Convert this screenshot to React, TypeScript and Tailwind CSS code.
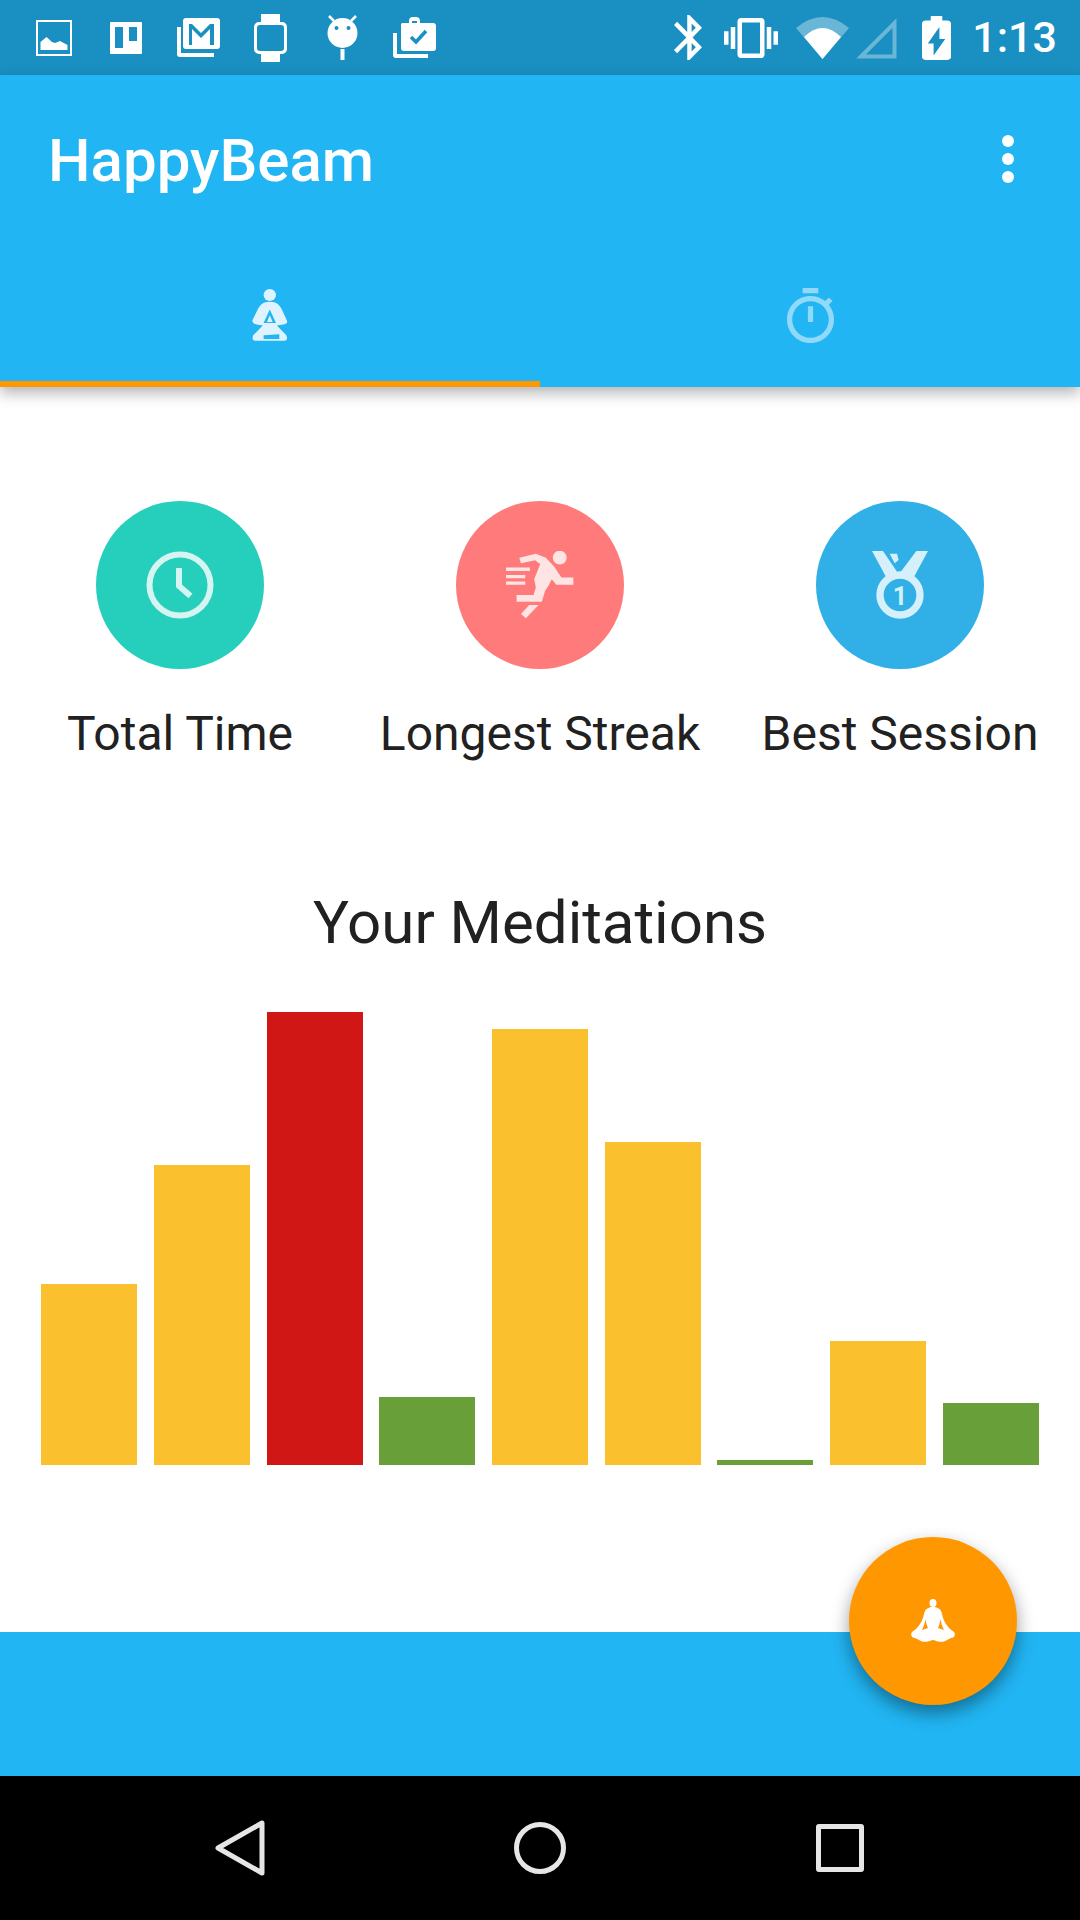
const bars = [
  { id: 1, height: 'h-[181px]', color: 'bg-[#fbc02d]' },
  { id: 2, height: 'h-[300px]', color: 'bg-[#fbc02d]' },
  { id: 3, height: 'h-[453px]', color: 'bg-[#d01716]' },
  { id: 4, height: 'h-[68px]', color: 'bg-[#689f38]' },
  { id: 5, height: 'h-[436px]', color: 'bg-[#fbc02d]' },
  { id: 6, height: 'h-[323px]', color: 'bg-[#fbc02d]' },
  { id: 7, height: 'h-[5px]', color: 'bg-[#689f38]' },
  { id: 8, height: 'h-[124px]', color: 'bg-[#fbc02d]' },
  { id: 9, height: 'h-[62px]', color: 'bg-[#689f38]' },
];

function StatusIconsLeft() {
  return (
    <div className="flex items-center">
      <svg viewBox="0 0 36 36" className="ml-[36px] h-[36px] w-[36px]" fill="none">
        <rect x="1" y="1" width="34" height="34" stroke="white" strokeWidth="2" />
        <path d="M4.500 30v-8l6-5 5.500 5 3 1 5-2 7.500 4v5z" fill="white" />
      </svg>
      <svg viewBox="0 0 32 32" className="ml-[38px] h-[32px] w-[32px]">
        <path fillRule="evenodd" d="M1 0h30a1 1 0 0 1 1 1v30a1 1 0 0 1-1 1H1a1 1 0 0 1-1-1V1a1 1 0 0 1 1-1zM5 5v21h8V5zm14 0v14h8V5z" fill="white" />
      </svg>
      <svg viewBox="0 0 43 39" className="ml-[35px] h-[39px] w-[43px]">
        <path fillRule="evenodd" d="M9 0h31a3 3 0 0 1 3 3v25a3 3 0 0 1-3 3H9a3 3 0 0 1-3-3V3a3 3 0 0 1 3-3zm3 6v21h3V11l9 9 9-9v16h4V6h-4l-9 9-9-9z" fill="white" />
        <path d="M0 9h4v26h33v4H3a3 3 0 0 1-3-3z" fill="white" />
      </svg>
      <svg viewBox="0 0 33 48" className="ml-[34px] h-[48px] w-[33px]">
        <path fillRule="evenodd" d="M7 0h19v8h2a5 5 0 0 1 5 5v22a5 5 0 0 1-5 5h-2v8H7v-8H5a5 5 0 0 1-5-5V13a5 5 0 0 1 5-5h2zM6 11a3 3 0 0 0-3 3v20a3 3 0 0 0 3 3h21a3 3 0 0 0 3-3V14a3 3 0 0 0-3-3z" fill="white" />
      </svg>
      <svg viewBox="0 0 31 45" className="ml-[40px] h-[45px] w-[31px]">
        <path d="M2 1l5 5M29 1l-5 5" stroke="white" strokeWidth="2.500" />
        <circle cx="15.500" cy="18" r="15" fill="white" />
        <circle cx="9.500" cy="13" r="2" fill="#1a8fc2" />
        <circle cx="21.500" cy="13" r="2" fill="#1a8fc2" />
        <rect x="13.500" y="34" width="4" height="11" fill="white" />
      </svg>
      <svg viewBox="0 0 43 41" className="ml-[35px] h-[41px] w-[43px]">
        <path fillRule="evenodd" d="M9 6h7V4a4 4 0 0 1 4-4h3a4 4 0 0 1 4 4v2h13a3 3 0 0 1 3 3v22a3 3 0 0 1-3 3H11a3 3 0 0 1-3-3V7zm10-2v2h5V4z" fill="white" />
        <path d="M18 20l5 5 10-11" stroke="#1a8fc2" strokeWidth="3.500" fill="none" />
        <path d="M0 16h4v21h31v4H3a3 3 0 0 1-3-3z" fill="white" />
      </svg>
    </div>
  );
}

function StatusIconsRight() {
  return (
    <div className="flex items-center">
      <svg viewBox="5 2 12.700 20" preserveAspectRatio="none" className="h-[45px] w-[28px]">
        <path d="M17.710 7.710L12 2h-1v7.590L6.410 5 5 6.410 10.590 12 5 17.590 6.410 19 11 14.410V22h1l5.710-5.710-4.300-4.290 4.300-4.290zM13 5.830l1.880 1.880L13 9.590V5.830zm1.880 10.460L13 18.170v-3.760l1.880 1.880z" fill="white" />
      </svg>
      <svg viewBox="0 3 24 18" preserveAspectRatio="none" className="ml-[22px] h-[40px] w-[54px]">
        <path d="M0 15h2V9H0v6zm3 2h2V7H3v10zm19-8v6h2V9h-2zm-3 8h2V7h-2v10zM16.500 3h-9C6.670 3 6 3.670 6 4.500v15c0 .83.67 1.500 1.500 1.500h9c.83 0 1.500-.67 1.500-1.500v-15c0-.83-.67-1.500-1.500-1.500zM16 19H8V5h8v14z" fill="white" />
      </svg>
      <svg viewBox="0 0 53 42" className="ml-[18px] h-[42px] w-[53px]">
        <path d="M0 11Q26.500-11 53 11L26.500 42z" fill="white" fillOpacity="0.35" />
        <path d="M8 20Q26.500 2 45 20L26.500 42z" fill="white" />
      </svg>
      <svg viewBox="0 0 42 42" className="ml-[6px] h-[42px] w-[42px]">
        <path d="M39.500 6v33.500H6z" fill="none" stroke="white" strokeOpacity="0.35" strokeWidth="4" />
      </svg>
      <svg viewBox="7 2 10 20" preserveAspectRatio="none" className="ml-[25px] h-[44px] w-[29px]">
        <path d="M15.670 4H14V2h-4v2H8.330C7.600 4 7 4.600 7 5.330v15.330C7 21.400 7.600 22 8.330 22h7.330c.74 0 1.340-.6 1.340-1.330V5.330C17 4.600 16.400 4 15.670 4zM11 20v-5.500H9L13 7v5.500h2L11 20z" fill="white" />
      </svg>
      <span className="mr-[23px] ml-[21px] text-[43px] leading-none font-medium text-white">1:13</span>
    </div>
  );
}

function SittingIcon() {
  return (
    <svg viewBox="124 87 87 155" preserveAspectRatio="none" className="h-[52px] w-[36px]">
      <ellipse cx="167" cy="105" rx="15" ry="18" fill="#def3fd" />
      <path
        fillRule="evenodd"
        d="M167 125C150 125 143 135 137 150L125 180Q124 190 135 193L150 196L127 225Q122 240 132 241H203Q212 240 207 225L184 196L200 193Q212 190 208 180L197 150C191 135 184 125 167 125ZM167 148L152 188H182ZM167 165L160 185H174ZM152 225L190 222V236H152Z"
        fill="#def3fd"
      />
    </svg>
  );
}

function TimerIcon() {
  return (
    <svg viewBox="3 1 18 21" className="h-[55px] w-[47px]">
      <path d="M15 1H9v2h6V1zm-4 13h2V8h-2v6zm8.030-6.610l1.420-1.420c-.43-.51-.9-.99-1.410-1.410l-1.420 1.420C16.070 4.740 14.120 4 12 4c-4.970 0-9 4.030-9 9s4.020 9 9 9 9-4.030 9-9c0-2.120-.74-4.070-1.970-5.610zM12 20c-3.870 0-7-3.130-7-7s3.130-7 7-7 7 3.130 7 7-3.130 7-7 7z" fill="#91d9f9" />
    </svg>
  );
}

function ClockIcon() {
  return (
    <svg viewBox="0 0 68 68" className="h-[68px] w-[68px]" fill="none">
      <circle cx="34" cy="34" r="30.500" stroke="#d4f5f1" strokeWidth="6" />
      <path d="M33 17v18l11.500 10" stroke="#d4f5f1" strokeWidth="6" />
    </svg>
  );
}

function RunnerIcon() {
  return (
    <svg viewBox="200 185 205 205" className="h-[68px] w-[68px]">
      <circle cx="362" cy="205" r="21" fill="#ffe4e4" />
      <path
        d="M240 205L290 193L320 205L345 232L367 265H403V287H352L338 270L328 290L318 305L308 338H232V318H283L290 295L285 270L303 225L288 213L245 222Z"
        fill="#ffe4e4"
      />
      <path d="M298 348H270L245 375L260 388Z" fill="#ffe4e4" />
      <path d="M200 240H272M200 262H258M200 282H258" stroke="#ffe4e4" strokeWidth="10" />
    </svg>
  );
}

function MedalIcon() {
  return (
    <svg viewBox="217 185 168 204" className="h-[68px] w-[56px]" fill="none">
      <path d="M217 185H250L292 247L285 268H262ZM385 185H350L300 252L312 268H340Z" fill="#d6f0fb" />
      <path d="M270 193H292L297 212L285 222Z" fill="#d6f0fb" />
      <circle cx="301" cy="317" r="60" stroke="#d6f0fb" strokeWidth="22" />
      <text x="301" y="347" fontSize="76" fontWeight="700" textAnchor="middle" fill="#d6f0fb">1</text>
    </svg>
  );
}

function MeditateIcon() {
  return (
    <svg viewBox="0 0 44 44" className="h-[44px] w-[44px]">
      <ellipse cx="22" cy="4" rx="3.500" ry="4" fill="white" />
      <path
        fillRule="evenodd"
        d="M22 8c5 0 8 2 9 7 1 6 4 11 8 15l4 3c2 3 0 6-3 6l-6 3c-4 2-8 0-12-1-4 1-8 3-12 1l-6-3c-3 0-5-3-3-6l4-3c4-4 7-9 8-15 1-5 4-7 9-7zM14.500 20C14 24 12.500 28 11 31L17 29C15.500 26 15 23 14.500 20ZM29.500 20C29 23 28.500 26 27 29L33 31C31.500 28 30 24 29.500 20Z"
        fill="white"
      />
    </svg>
  );
}

function NavBar() {
  return (
    <div className="flex h-[144px] items-center justify-center bg-black">
      <div className="flex w-[300px] justify-center">
        <svg viewBox="0 0 50 56" className="h-[56px] w-[50px]" fill="none">
          <path d="M47 3v50L3 28z" stroke="#e6e6e6" strokeWidth="5" strokeLinejoin="round" />
        </svg>
      </div>
      <div className="flex w-[300px] justify-center">
        <div className="h-[52px] w-[52px] rounded-full border-[5px] border-[#e6e6e6]" />
      </div>
      <div className="flex w-[300px] justify-center">
        <div className="h-[48px] w-[48px] rounded-[3px] border-[5px] border-[#e6e6e6]" />
      </div>
    </div>
  );
}

export default function App() {
  return (
    <div className="relative flex h-[1920px] w-[1080px] flex-col overflow-hidden bg-white font-['Roboto',sans-serif]">
      <div className="flex h-[75px] items-center justify-between bg-[#1a8fc2]">
        <StatusIconsLeft />
        <StatusIconsRight />
      </div>

      <div className="relative z-10 bg-[#21b5f3] shadow-[0_6px_14px_rgba(0,0,0,0.3)]">
        <div className="flex h-[168px] items-center justify-between pr-[66px] pl-[48px]">
          <h1 className="mt-[4px] text-[60px] font-medium text-white">HappyBeam</h1>
          <div className="flex flex-col gap-[6px]">
            <span className="h-[12px] w-[12px] rounded-full bg-white" />
            <span className="h-[12px] w-[12px] rounded-full bg-white" />
            <span className="h-[12px] w-[12px] rounded-full bg-white" />
          </div>
        </div>
        <div className="flex h-[144px]">
          <div className="flex flex-1 items-center justify-center border-b-[6px] border-[#ff9800] pt-[6px]">
            <SittingIcon />
          </div>
          <div className="flex flex-1 items-center justify-center border-b-[6px] border-transparent pt-[6px]">
            <TimerIcon />
          </div>
        </div>
      </div>

      <main className="flex flex-1 flex-col pt-[114px]">
        <div className="grid grid-cols-3">
          <div className="flex flex-col items-center">
            <div className="flex h-[168px] w-[168px] items-center justify-center rounded-full bg-[#26cfbb]">
              <ClockIcon />
            </div>
            <p className="mt-[37px] text-[48px] leading-[56px] text-[#212121]">Total Time</p>
          </div>
          <div className="flex flex-col items-center">
            <div className="flex h-[168px] w-[168px] items-center justify-center rounded-full bg-[#ff7b7b]">
              <RunnerIcon />
            </div>
            <p className="mt-[37px] text-[48px] leading-[56px] text-[#212121]">Longest Streak</p>
          </div>
          <div className="flex flex-col items-center">
            <div className="flex h-[168px] w-[168px] items-center justify-center rounded-full bg-[#30b0e6]">
              <MedalIcon />
            </div>
            <p className="mt-[37px] text-[48px] leading-[56px] text-[#212121]">Best Session</p>
          </div>
        </div>

        <h2 className="mt-[126px] text-center text-[60px] leading-[70px] text-[#212121]">Your Meditations</h2>

        <div className="mt-[54px] flex h-[453px] items-end gap-[16.670px] pl-[41.330px]">
          {bars.map((bar) => (
            <div key={bar.id} className={`w-[96px] ${bar.height} ${bar.color}`} />
          ))}
        </div>
      </main>

      <div className="h-[144px] bg-[#21b5f3]" />
      <NavBar />

      <button className="absolute top-[1537px] left-[849px] z-20 flex h-[168px] w-[168px] items-center justify-center rounded-full bg-[#ff9800] shadow-[0_8px_18px_rgba(0,0,0,0.4)]">
        <MeditateIcon />
      </button>
    </div>
  );
}
